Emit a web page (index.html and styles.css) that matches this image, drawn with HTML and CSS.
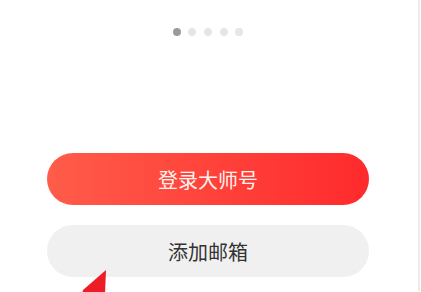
FILE: index.html
```html
<!DOCTYPE html>
<html lang="zh">
<head>
<meta charset="utf-8">
<link rel="stylesheet" href="styles.css">
</head>
<body>
<div class="screen">
  <main class="page">
    <div class="dots">
      <span class="dot active"></span>
      <span class="dot"></span>
      <span class="dot"></span>
      <span class="dot"></span>
      <span class="dot"></span>
    </div>
    <div class="actions">
      <button class="btn btn-primary">登录大师号</button>
      <button class="btn btn-secondary">添加邮箱</button>
    </div>
  </main>
  <div class="rail"></div>
  <svg class="arrow" width="30" height="24" viewBox="0 0 30 24">
    <polygon points="26,0 3,20 2,24 25,24" fill="#ee1c25"/>
  </svg>
</div>
</body>
</html>
```

FILE: styles.css
```css
html, body {
  margin: 0;
  padding: 0;
  background: #fff;
}
.screen {
  position: relative;
  width: 421px;
  height: 292px;
  overflow: hidden;
  display: flex;
  font-family: "Noto Sans CJK SC", "Noto Sans", sans-serif;
}
.page {
  width: 416px;
  display: flex;
  flex-direction: column;
  align-items: center;
}
.dots {
  display: flex;
  gap: 7.7px;
  margin-top: 28px;
}
.dot {
  width: 8px;
  height: 8px;
  border-radius: 50%;
  background: #e6e6e6;
}
.dot.active {
  background: #9b9b9b;
}
.actions {
  margin-top: 117px;
  display: flex;
  flex-direction: column;
  gap: 20px;
  width: 322px;
}
.btn {
  height: 52px;
  border: none;
  border-radius: 26px;
  font-family: inherit;
  font-size: 20px;
  padding: 0;
  letter-spacing: 0;
}
.btn-primary {
  background: linear-gradient(90deg, #ff5c4a 0%, #ff2a2c 100%);
  color: #fff3f0;
}
.btn-secondary {
  background: #f0f0f0;
  color: #333;
}
.rail {
  width: 2px;
  height: 291px;
  margin-left: 2px;
  background: #ececec;
}
.arrow {
  position: absolute;
  left: 80px;
  top: 270px;
}
```
